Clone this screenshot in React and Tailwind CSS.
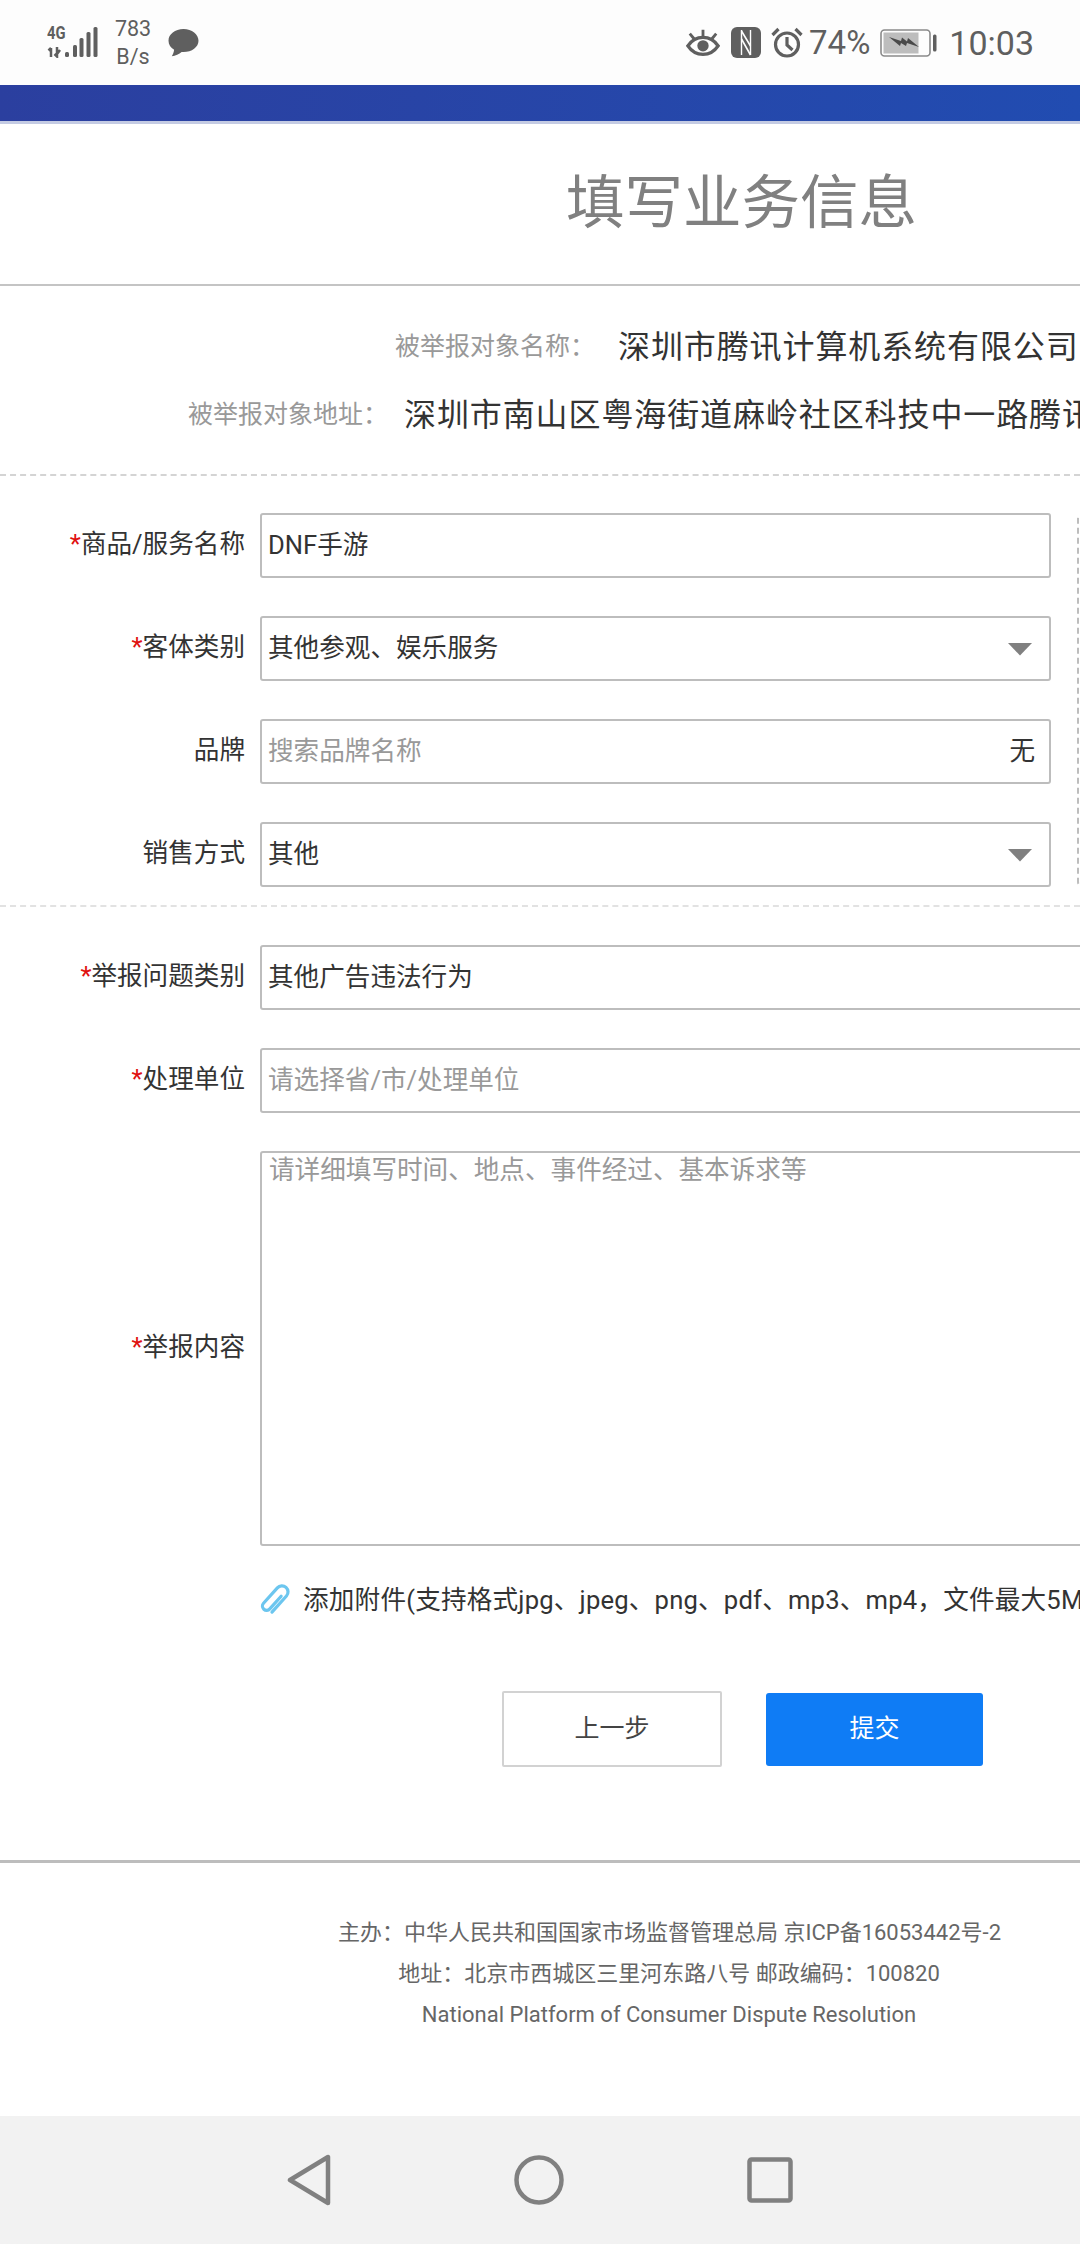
const FONT = "font-['Roboto','Noto_Sans_CJK_SC',sans-serif]";

function Label({ required, children }) {
  return (
    <div className="w-[245px] shrink-0 pb-[3px] text-right text-[25.6px] leading-[36px] text-[#333]">
      {required && <span className="text-[#e01010]">*</span>}
      {children}
    </div>
  );
}

function Caret() {
  return (
    <svg width="26" height="14" viewBox="0 0 26 14" className="ml-auto mr-[2px]">
      <path d="M1 1h24L13 13.5z" fill="#808080" />
    </svg>
  );
}

function Field({ label, required, value, placeholder, right, wide }) {
  return (
    <div className="flex items-center">
      <Label required={required}>{label}</Label>
      <div
        className={`ml-[15px] flex h-[65px] shrink-0 items-center rounded-[3px] border-2 border-[#bdbdbd] pl-[6px] pr-[14px] text-[25.6px] ${wide ? "w-[900px]" : "w-[791px]"}`}
      >
        {value ? <span className="text-[#333]">{value}</span> : <span className="text-[#999]">{placeholder}</span>}
        {right}
      </div>
    </div>
  );
}

export default function App() {
  return (
    <div className={`relative h-[2244px] w-[1080px] overflow-hidden bg-white ${FONT}`}>
      {/* status bar */}
      <div className="flex h-[85px] items-center justify-between bg-[#fdfdfd] pl-[47px] pr-[46px] text-[#5f5f5f]">
        <div className="flex items-center">
          <div className="relative h-[31px] w-[51px]">
            <span className="absolute left-0 top-[-3px] origin-left scale-x-[0.82] text-[18px] font-bold leading-[18px]">4G</span>
            <svg width="51" height="31" viewBox="0 0 51 31" className="absolute left-0 top-0">
              <path d="M4 21v9M1.500 23.500L4 21M10 20v9.500L7.500 27M13 23l-3 4" stroke="#5f5f5f" strokeWidth="2.500" fill="none" />
              <rect x="18" y="25" width="4" height="5" rx="1.500" fill="#5f5f5f" />
              <rect x="26" y="18" width="4" height="12" rx="1.500" fill="#5f5f5f" />
              <rect x="32.500" y="11" width="4" height="19" rx="1.500" fill="#5f5f5f" />
              <rect x="39.500" y="5" width="4" height="25" rx="1.500" fill="#5f5f5f" />
              <rect x="46.500" y="0" width="4" height="30" rx="1.500" fill="#5f5f5f" />
            </svg>
          </div>
          <div className="ml-[16px] w-[38px] text-center text-[21.5px] leading-[28px]">
            <div>783</div>
            <div>B/s</div>
          </div>
          <svg width="33" height="30" viewBox="0 0 34 32" className="ml-[15px]">
            <path d="M17 1C8 1 1 6.500 1 13.500c0 4 2.300 7.500 6 9.800-.3 2.500-1.200 5-2.500 6.700 3.800-.3 8-2.300 10.500-4.500.7.100 1.400.1 2 .1 9 0 16-5.500 16-12.100S26 1 17 1z" fill="#5f5f5f" />
          </svg>
        </div>
        <div className="flex items-center">
          <svg width="34" height="30" viewBox="0 0 36 30">
            <path d="M2 18c4-6 9-9 16-9s12 3 16 9c-4 6-9 9-16 9S6 24 2 18z" fill="none" stroke="#5f5f5f" strokeWidth="3.600" />
            <circle cx="18" cy="18" r="6" fill="#5f5f5f" />
            <path d="M4 5l4.500 5.500M18 1v7M32 5l-4.500 5.500" stroke="#5f5f5f" strokeWidth="3" />
          </svg>
          <svg width="30" height="31" viewBox="0 0 30 31" className="ml-[11px]">
            <rect x="0" y="0" width="30" height="31" rx="6" fill="#5f5f5f" />
            <path d="M10.500 3v25M19.500 3v25" stroke="#fdfdfd" strokeWidth="1.400" fill="none" />
            <path d="M10.500 4l9 15M10.500 12l9 16" stroke="#fdfdfd" strokeWidth="1.600" fill="none" />
          </svg>
          <svg width="32" height="31" viewBox="0 0 32 31" className="ml-[10px]">
            <circle cx="16" cy="17.500" r="11.500" fill="none" stroke="#5f5f5f" strokeWidth="3.200" />
            <path d="M16 10v8l5.500 5M1.500 8l6-6M30.500 8l-6-6" fill="none" stroke="#5f5f5f" strokeWidth="3.200" />
          </svg>
          <span className="ml-[6px] text-[33px] leading-none">74%</span>
          <svg width="57" height="28" viewBox="0 0 57 28" className="ml-[10px]">
            <rect x="1" y="1" width="49" height="26" rx="3.500" fill="none" stroke="#8a8a8a" strokeWidth="1.600" />
            <rect x="3.500" y="3.500" width="35" height="21" fill="#bdbdbd" />
            <rect x="53" y="5.500" width="3.500" height="17" rx="1.500" fill="#5f5f5f" />
            <path d="M9 8l12 4 1-3.500 5 4 1-3.500 11 9-12-4-1 3-5-3-1 3z" fill="#4a4a4a" />
          </svg>
          <span className="ml-[12px] text-[34px] leading-none">10:03</span>
        </div>
      </div>

      {/* blue bar */}
      <div className="h-[36px] bg-gradient-to-r from-[#2b3f9f] to-[#214cb1]" />
      <div className="h-[3px] bg-[#c4cbe3]" />

      {/* title */}
      <div className="flex h-[162px] items-center border-b-2 border-[#c4c4c4] pb-[2px] pl-[566px] text-[58.5px] leading-none text-[#808080]">
        填写业务信息
      </div>

      {/* target info */}
      <div className="overflow-hidden whitespace-nowrap border-b-2 border-dashed border-[#d4d4d4] pb-[25px] pt-[27px]">
        <div className="flex h-[68px] items-center">
          <span className="ml-[395px] w-[223px] shrink-0 text-[25px] text-[#999]">被举报对象名称：</span>
          <span className="text-[32px] tracking-[0.9px] text-[#333]">深圳市腾讯计算机系统有限公司</span>
        </div>
        <div className="flex h-[68px] items-center">
          <span className="ml-[188px] w-[216px] shrink-0 text-[25px] text-[#999]">被举报对象地址：</span>
          <span className="text-[32px] tracking-[0.9px] text-[#333]">深圳市南山区粤海街道麻岭社区科技中一路腾讯大厦</span>
        </div>
      </div>

      {/* product section */}
      <div className="relative flex flex-col gap-[38px] border-b-2 border-dashed border-[#e2e2e2] pb-[18px] pt-[37px]">
        <Field required label="商品/服务名称" value="DNF手游" />
        <Field required label="客体类别" value="其他参观、娱乐服务" right={<Caret />} />
        <Field label="品牌" placeholder="搜索品牌名称" right={<span className="ml-auto text-[#333]">无</span>} />
        <Field label="销售方式" value="其他" right={<Caret />} />
        <div className="absolute left-[1077px] top-[38px] h-[372px] w-[20px] rounded-[4px] border-2 border-dashed border-[#bdbdbd]" />
      </div>

      {/* report section */}
      <div className="flex flex-col gap-[38px] pt-[38px]">
        <Field required label="举报问题类别" value="其他广告违法行为" wide />
        <Field required label="处理单位" placeholder="请选择省/市/处理单位" wide />
        <div className="flex items-center">
          <Label required>举报内容</Label>
          <div className="ml-[15px] h-[395px] w-[900px] shrink-0 rounded-[3px] border-2 border-[#bdbdbd] pl-[7px] pt-[1px] text-[25.6px] leading-[32px] text-[#999]">
            请详细填写时间、地点、事件经过、基本诉求等
          </div>
        </div>
      </div>

      {/* attachment */}
      <div className="mt-[34px] flex h-[40px] items-center whitespace-nowrap pl-[258px] text-[25.6px] tracking-[0.2px] text-[#333]">
        <svg width="32" height="34" viewBox="-17 -17 34 34" className="shrink-0">
          <g transform="rotate(42)">
            <path d="M3 -8V10a4.500 4.500 0 0 1-9 0V-12a6.500 6.500 0 0 1 13 0V11" fill="none" stroke="#6cc6ef" strokeWidth="3.400" strokeLinecap="round" />
          </g>
        </svg>
        <span className="ml-[13px]">添加附件(支持格式jpg、jpeg、png、pdf、mp3、mp4，文件最大5M</span>
      </div>

      {/* buttons */}
      <div className="mt-[71px] flex items-center pl-[502px]">
        <button className="h-[76px] w-[220px] rounded-[2px] border-2 border-[#d2d2d2] bg-white text-[25px] text-[#444]">上一步</button>
        <button className="ml-[44px] h-[73px] w-[217px] rounded-[3px] bg-[#0f7cf5] text-[25px] text-white">提交</button>
      </div>

      {/* footer */}
      <div className="mt-[93px] h-[256px] border-t-[3px] border-[#bdbdbd] pl-[338px] pr-[80px] pt-[49px] text-center text-[22px] leading-[41px] text-[#666]">
        <div className="whitespace-nowrap">主办：中华人民共和国国家市场监督管理总局 京ICP备16053442号-2</div>
        <div className="whitespace-nowrap">地址：北京市西城区三里河东路八号 邮政编码：100820</div>
        <div className="whitespace-nowrap">National Platform of Consumer Dispute Resolution</div>
      </div>

      {/* nav bar */}
      <div className="flex h-[129px] items-center justify-center gap-[183px] bg-[#f2f2f2] pb-[1px]">
        <svg width="44" height="52" viewBox="0 0 44 52">
          <path d="M41 3v46L3 26z" fill="none" stroke="#808080" strokeWidth="4.500" strokeLinejoin="round" />
        </svg>
        <svg width="50" height="50" viewBox="0 0 50 50">
          <circle cx="25" cy="25" r="22.500" fill="none" stroke="#808080" strokeWidth="4.500" />
        </svg>
        <svg width="46" height="46" viewBox="0 0 46 46">
          <rect x="2.500" y="2.500" width="41" height="41" rx="2" fill="none" stroke="#808080" strokeWidth="4.500" />
        </svg>
      </div>
    </div>
  );
}
